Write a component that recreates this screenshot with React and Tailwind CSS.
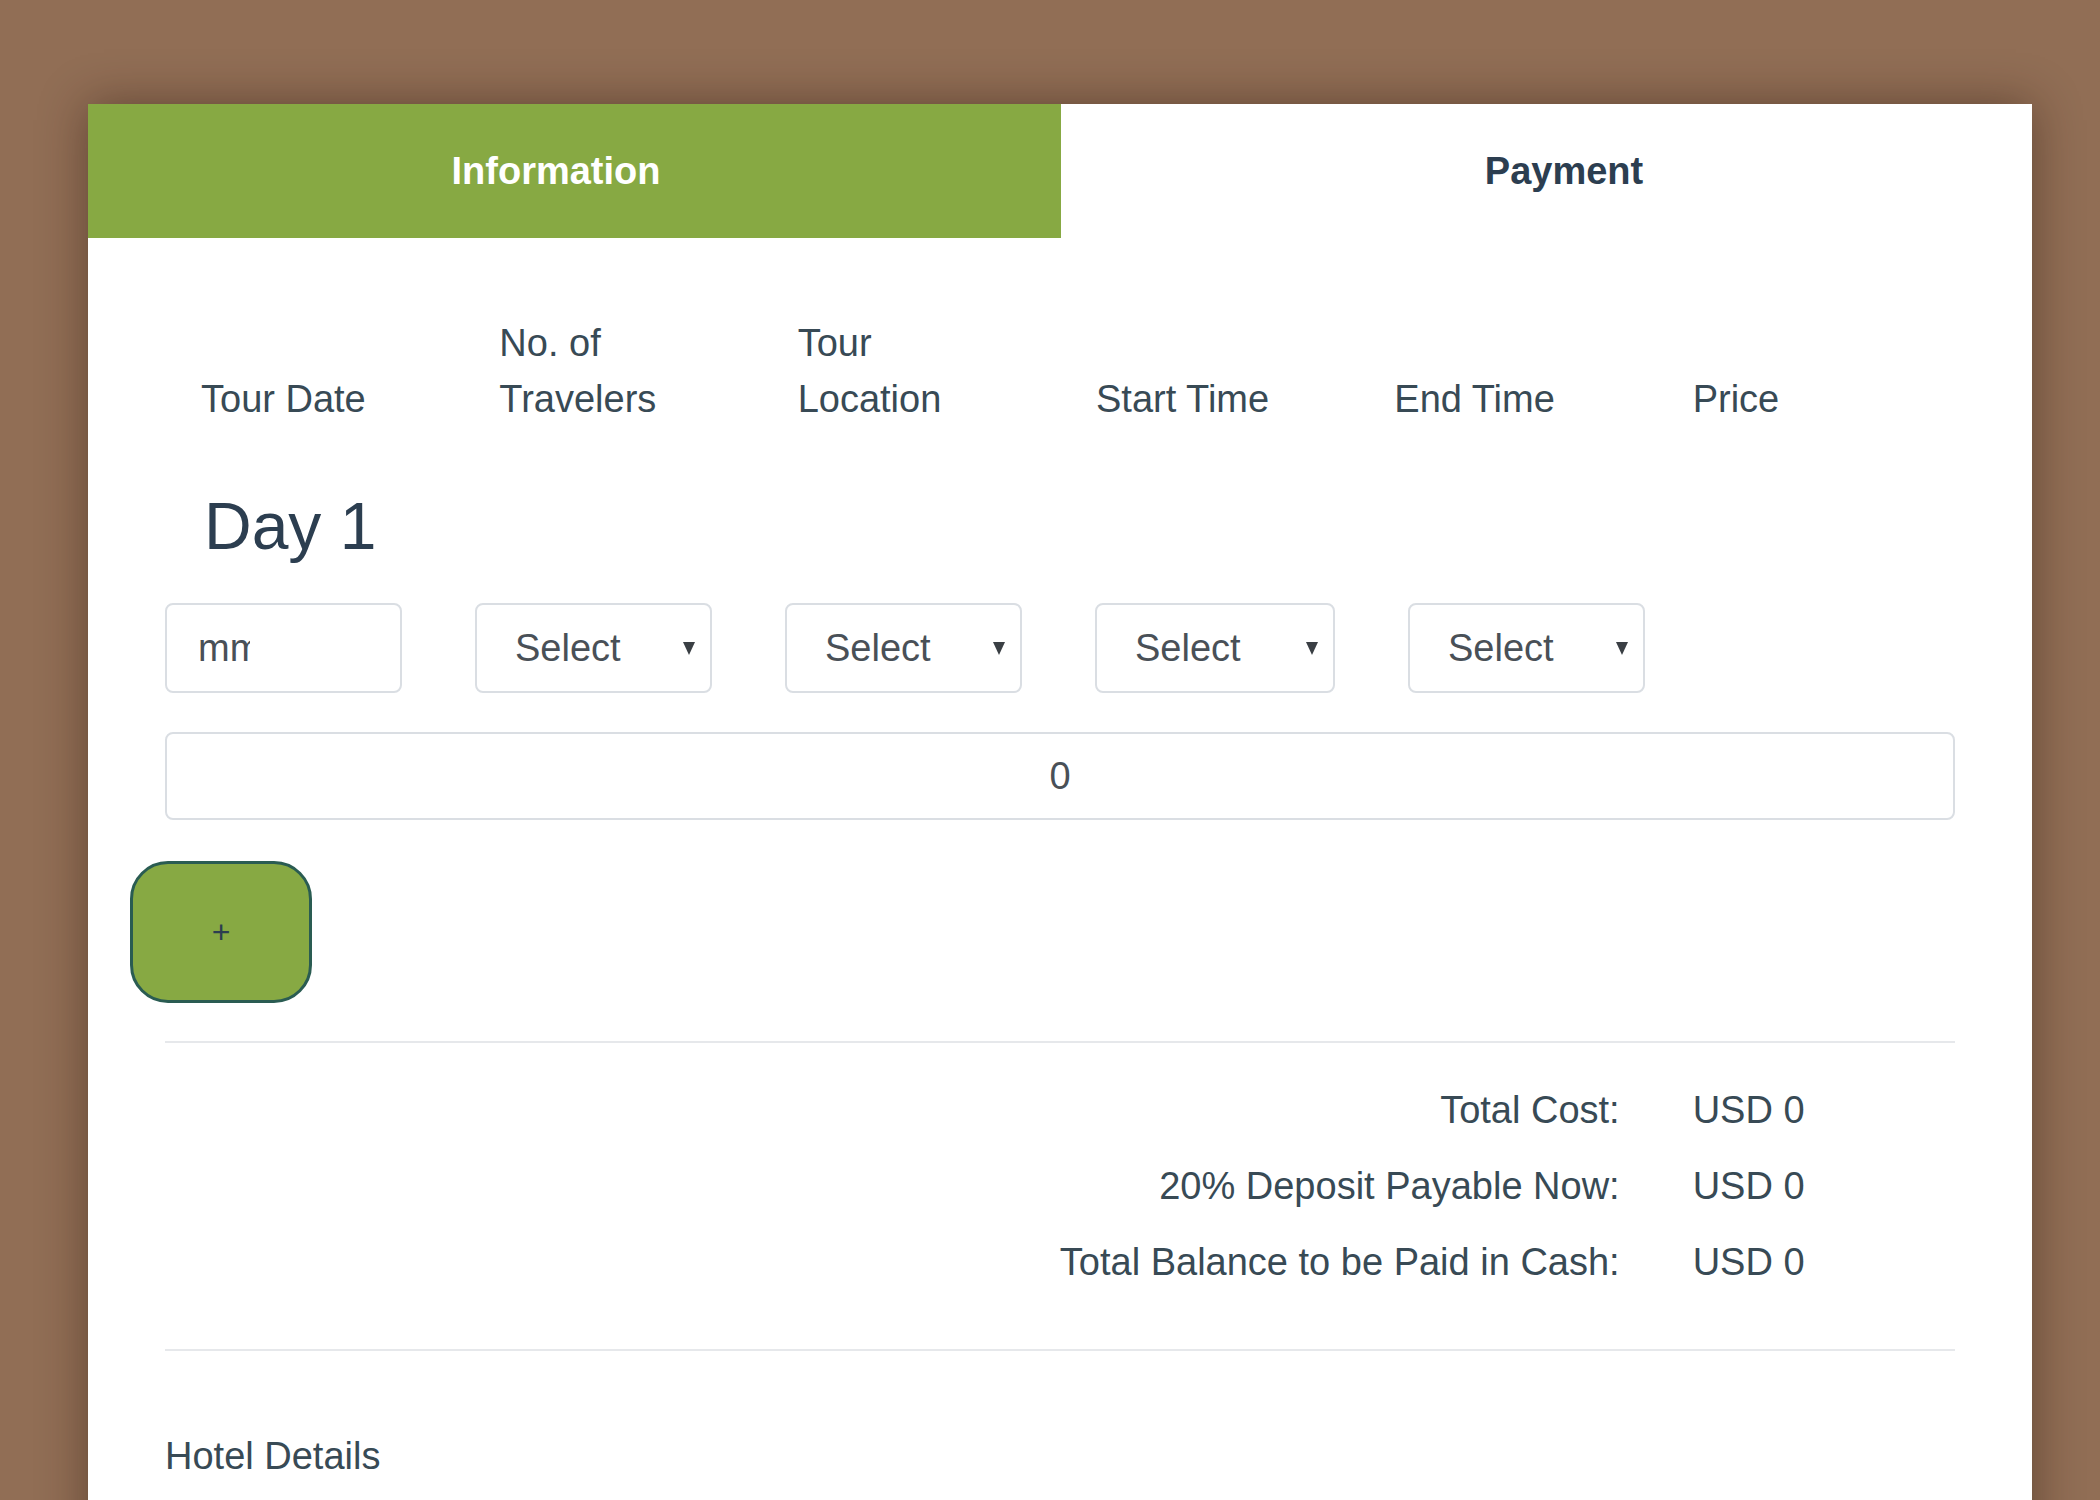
import React from "react";

const headers = [
  ["", "Tour Date"],
  ["No. of", "Travelers"],
  ["Tour", "Location"],
  ["", "Start Time"],
  ["", "End Time"],
  ["", "Price"],
];

const totals = [
  ["Total Cost:", "USD 0"],
  ["20% Deposit Payable Now:", "USD 0"],
  ["Total Balance to be Paid in Cash:", "USD 0"],
];

function Caret() {
  return (
    <svg width="12" height="13" viewBox="0 0 12 13" className="shrink-0">
      <polygon points="0,0 12,0 6,13" fill="#3a3f44" />
    </svg>
  );
}

function SelectBox({ wide }) {
  return (
    <div
      className={
        "flex h-[90px] items-center justify-between rounded-[8px] border-2 border-[#dadee3] bg-white pl-[38px] pr-[15px] text-[38px] text-[#495057] " +
        (wide ? "w-[240px]" : "w-[237px]")
      }
    >
      <span>Select</span>
      <Caret />
    </div>
  );
}

export default function App() {
  return (
    <div
      className="h-[1500px] overflow-hidden bg-[#916e55] px-[88px] pt-[104px]"
      style={{ fontFamily: "'Liberation Sans', Arial, sans-serif" }}
    >
      <div className="h-[1500px] w-[1944px] bg-white shadow-[0_0_45px_rgba(40,20,10,0.45)]">
        {/* Tabs */}
        <div className="flex h-[134px]">
          <div className="flex w-[973px] items-center justify-center bg-[#87a943] pr-[37px] text-[38px] font-bold text-white">
            Information
          </div>
          <div className="flex flex-1 items-center justify-center pl-[35px] text-[38px] font-bold text-[#2c3e50]">
            Payment
          </div>
        </div>

        <div className="px-[77px] pt-[77px] text-[38px] leading-[56px] text-[#384a55]">
          {/* Column headers */}
          <div className="grid grid-cols-6 items-end">
            {headers.map(([a, b]) => (
              <div key={b} className="pl-[36px]">
                {a && <div>{a}</div>}
                <div>{b}</div>
              </div>
            ))}
          </div>

          <h2 className="mt-[60px] pl-[39px] text-[66px] leading-[78px] text-[#2c3e50]">Day 1</h2>

          {/* Day row */}
          <div className="mt-[38px] flex gap-[73px]">
            <div className="flex h-[90px] w-[237px] items-center rounded-[8px] border-2 border-[#dadee3] pl-[31px] text-[#495057]">
              <span className="block w-[52px] overflow-hidden whitespace-nowrap">mm/dd/yyyy</span>
            </div>
            <SelectBox />
            <SelectBox />
            <SelectBox wide />
            <SelectBox />
          </div>

          <div className="mt-[39px] flex h-[88px] items-center justify-center rounded-[8px] border-2 border-[#dadee3] text-[#495057]">
            0
          </div>

          <button className="-ml-[35px] mt-[41px] flex h-[142px] w-[182px] items-center justify-center rounded-[38px] border-[3px] border-[#2a5c52] bg-[#87a943] text-[32px] text-[#2c3e50]">
            +
          </button>

          <div className="mt-[38px] h-[2px] bg-[#e6e8eb]" />

          {/* Totals */}
          <div className="mt-[39px] flex flex-col gap-[20px]">
            {totals.map(([label, value]) => (
              <div key={label} className="grid grid-cols-6">
                <div className="col-span-5 pr-[37px] text-right">{label}</div>
                <div className="pl-[36px]">{value}</div>
              </div>
            ))}
          </div>

          <div className="mt-[59px] h-[2px] bg-[#e6e8eb]" />

          <div className="mt-[77px]">Hotel Details</div>
        </div>
      </div>
    </div>
  );
}
